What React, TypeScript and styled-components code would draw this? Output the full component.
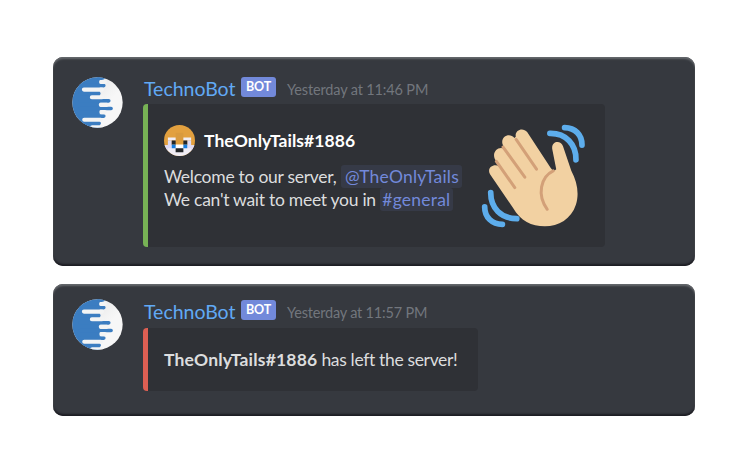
import React from 'react';
import styled, { createGlobalStyle } from 'styled-components';

const GlobalStyle = createGlobalStyle`
  * { box-sizing: border-box; }
  body {
    margin: 0;
    background: #fff;
    font-family: Lato, "Noto Sans", sans-serif;
  }
`;

const Page = styled.main`
  width: 750px;
  height: 450px;
  padding: 57px 55px 0 53px;
  display: flex;
  flex-direction: column;
  gap: 18px;
`;

const Card = styled.article<{ $height: number; $top: number }>`
  display: flex;
  gap: 20px;
  height: ${p => p.$height}px;
  padding: ${p => p.$top}px 19px 0;
  border-radius: 10px;
  background: #36393f;
  box-shadow: inset 0 2px 2px #66696d, inset 0 -2px 2px #1d1d23;
`;

const LogoSvg = styled.svg`
  width: 51px;
  height: 51px;
  flex: none;
`;

const Body = styled.div`
  flex: 1;
  min-width: 0;
`;

const Header = styled.header<{ $height: number; $offset: number }>`
  display: flex;
  height: ${p => p.$height}px;
  padding-top: ${p => p.$offset}px;
  white-space: nowrap;
`;

const Username = styled.span`
  width: 98px;
  padding-left: 1px;
  font-size: 19.5px;
  line-height: 23px;
  letter-spacing: -0.02px;
  color: #61a9f5;
`;

const BotTag = styled.span`
  width: 35px;
  height: 20px;
  border-radius: 3px;
  background: #7289da;
  color: #fff;
  font-size: 12.5px;
  font-weight: 700;
  letter-spacing: -0.2px;
  line-height: 19px;
  text-align: center;
`;

const Timestamp = styled.time<{ $spacing: number }>`
  margin-left: 11px;
  font-size: 14.5px;
  line-height: 26px;
  letter-spacing: ${p => p.$spacing}px;
  color: #72767d;
`;

const Embed = styled.section<{ $accent: string; $width: number; $height: number }>`
  display: flex;
  width: ${p => p.$width}px;
  height: ${p => p.$height}px;
  padding-left: 16px;
  border-left: 5px solid ${p => p.$accent};
  border-radius: 4px;
  background: #2f3136;
  color: #dcddde;
  font-size: 17.5px;
  white-space: nowrap;
`;

const Welcome = styled.div`
  width: 316px;
  padding-top: 20px;
`;

const Author = styled.div`
  display: flex;
  align-items: center;
  gap: 9px;
  height: 32px;
  color: #fff;
`;

const FaceSvg = styled.svg`
  width: 31px;
  height: 31px;
`;

const Name = styled.strong<{ $spacing: number }>`
  font-size: 17.5px;
  font-weight: 700;
  letter-spacing: ${p => p.$spacing}px;
`;

const Message = styled.div`
  padding-top: 9px;
`;

const Line = styled.div<{ $gap: number }>`
  display: flex;
  gap: ${p => p.$gap}px;
  height: 23px;
  line-height: 23px;
  letter-spacing: -0.27px;
`;

const Mention = styled.span<{ $width: number }>`
  width: ${p => p.$width}px;
  height: 23px;
  text-align: center;
  letter-spacing: 0.2px;
  border-radius: 3px;
  color: #7289da;
  background: #363a47;
`;

const HandSvg = styled.svg`
  width: 107px;
  height: 107px;
  margin-top: 18px;
`;

const Notice = styled.p`
  margin: 0;
  line-height: 63px;
  letter-spacing: -0.34px;
`;

const Logo = () => (
  <LogoSvg viewBox="35 32 154 154">
    <defs>
      <clipPath id="disc"><circle cx="112" cy="109" r="76" /></clipPath>
      <linearGradient id="pearl" x1="0" y1="0" x2="1" y2="1">
        <stop offset=".3" stopColor="#e9eaea" />
        <stop offset=".6" stopColor="#f7f7f7" />
      </linearGradient>
    </defs>
    <g clipPath="url(#disc)" fill="none" strokeLinecap="round">
      <path d="M35 32H189V186H35Z" fill="url(#pearl)" />
      <path d="M35 32H119V186H35Z" fill="#3b7dc1" />
      <path stroke="#3b7dc1" strokeWidth="11" d="M60 58H131M60 82H116M60 104H146M60 127H153M60 150H131M60 172H117" />
      <path stroke="#f3f4f4" strokeWidth="12.5" d="M123 47H134M71 70H126M95 93H126M122 116H140M124 138H134M72 161H122M96 184H126" />
      <path fill="#3b7dc1" d="M112 30H138Q134 42 122 41H112Z" />
    </g>
  </LogoSvg>
);

const Face = () => (
  <FaceSvg viewBox="0 0 8 8">
    <defs><clipPath id="face"><circle cx="4" cy="4" r="4" /></clipPath></defs>
    <g clipPath="url(#face)">
      <path fill="#e2a03f" d="M0 0H8V8H0Z" />
      <path fill="#d99a3e" d="M3 2H5V4H3Z" />
      <path fill="#f0edf5" d="M1 3.2H3V4H1ZM5 3.2H7V4H5ZM0 5.2H8V8H0Z" />
      <path fill="#dedaf5" d="M1 4H2V6H1ZM6 4H7V6H6ZM0 5.2H1V7H0ZM7 5.2H8V7H7Z" />
      <path fill="#fff" d="M3 5H5V6H3Z" />
      <path fill="#24272a" d="M2 4H3V5H2ZM5 4H6V5H5ZM3 6H5V7H3Z" />
      <path fill="#187fe0" d="M2 5H3V6H2ZM5 5H6V6H5Z" />
    </g>
  </FaceSvg>
);

const Hand = () => (
  <HandSvg viewBox="30 20 320 320" fill="none" strokeLinecap="round">
    <path fill="#f2d1a2" d="M137 64C133 43 159 35 171 50L241 157Q249 170 258 161L246 101C243 77 271 73 278 92L303 166C321 200 327 234 317 267C303 311 265 332 224 332C184 332 151 315 129 277L60 176C49 157 72 143 87 153L74 130C65 107 88 90 103 101L97 85C92 63 119 51 133 68Z" />
    <g stroke="#d3a078" strokeWidth="9">
      <path d="M138 72L199 161M99 95L164 185M79 138L134 216" />
      <path d="M249 166C211 184 200 239 231 281" />
    </g>
    <g stroke="#5dadec" strokeWidth="17">
      <path d="M239 54C287 53 318 87 317 133M283 37C315 38 335 58 335 89" />
      <path d="M62 231C62 278 93 309 140 309M44 274C44 305 66 326 97 326" />
    </g>
  </HandSvg>
);

interface HeaderProps {
  time: string;
  height: number;
  offset: number;
  spacing: number;
}

const MessageHeader = ({ time, height, offset, spacing }: HeaderProps) => (
  <Header $height={height} $offset={offset}>
    <Username>TechnoBot</Username>
    <BotTag>BOT</BotTag>
    <Timestamp $spacing={spacing}>{time}</Timestamp>
  </Header>
);

export default function App() {
  return (
    <>
      <GlobalStyle />
      <Page>
        <Card $height={209} $top={20}>
          <Logo />
          <Body>
            <MessageHeader time="Yesterday at 11:46 PM" height={27} offset={0} spacing={-0.15} />
            <Embed $accent="#77b255" $width={462} $height={143}>
              <Welcome>
                <Author><Face /><Name $spacing={0.05}>TheOnlyTails#1886</Name></Author>
                <Message>
                  <Line $gap={5}>Welcome to our server, <Mention $width={121}>@TheOnlyTails</Mention></Line>
                  <Line $gap={4}>We can't wait to meet you in <Mention $width={73}>#general</Mention></Line>
                </Message>
              </Welcome>
              <Hand />
            </Embed>
          </Body>
        </Card>
        <Card $height={132} $top={15}>
          <Logo />
          <Body>
            <MessageHeader time="Yesterday at 11:57 PM" height={29} offset={1} spacing={-0.2} />
            <Embed $accent="#dd5f53" $width={335} $height={63}>
              <Notice><Name $spacing={0.18}>TheOnlyTails#1886</Name> has left the server!</Notice>
            </Embed>
          </Body>
        </Card>
      </Page>
    </>
  );
}
